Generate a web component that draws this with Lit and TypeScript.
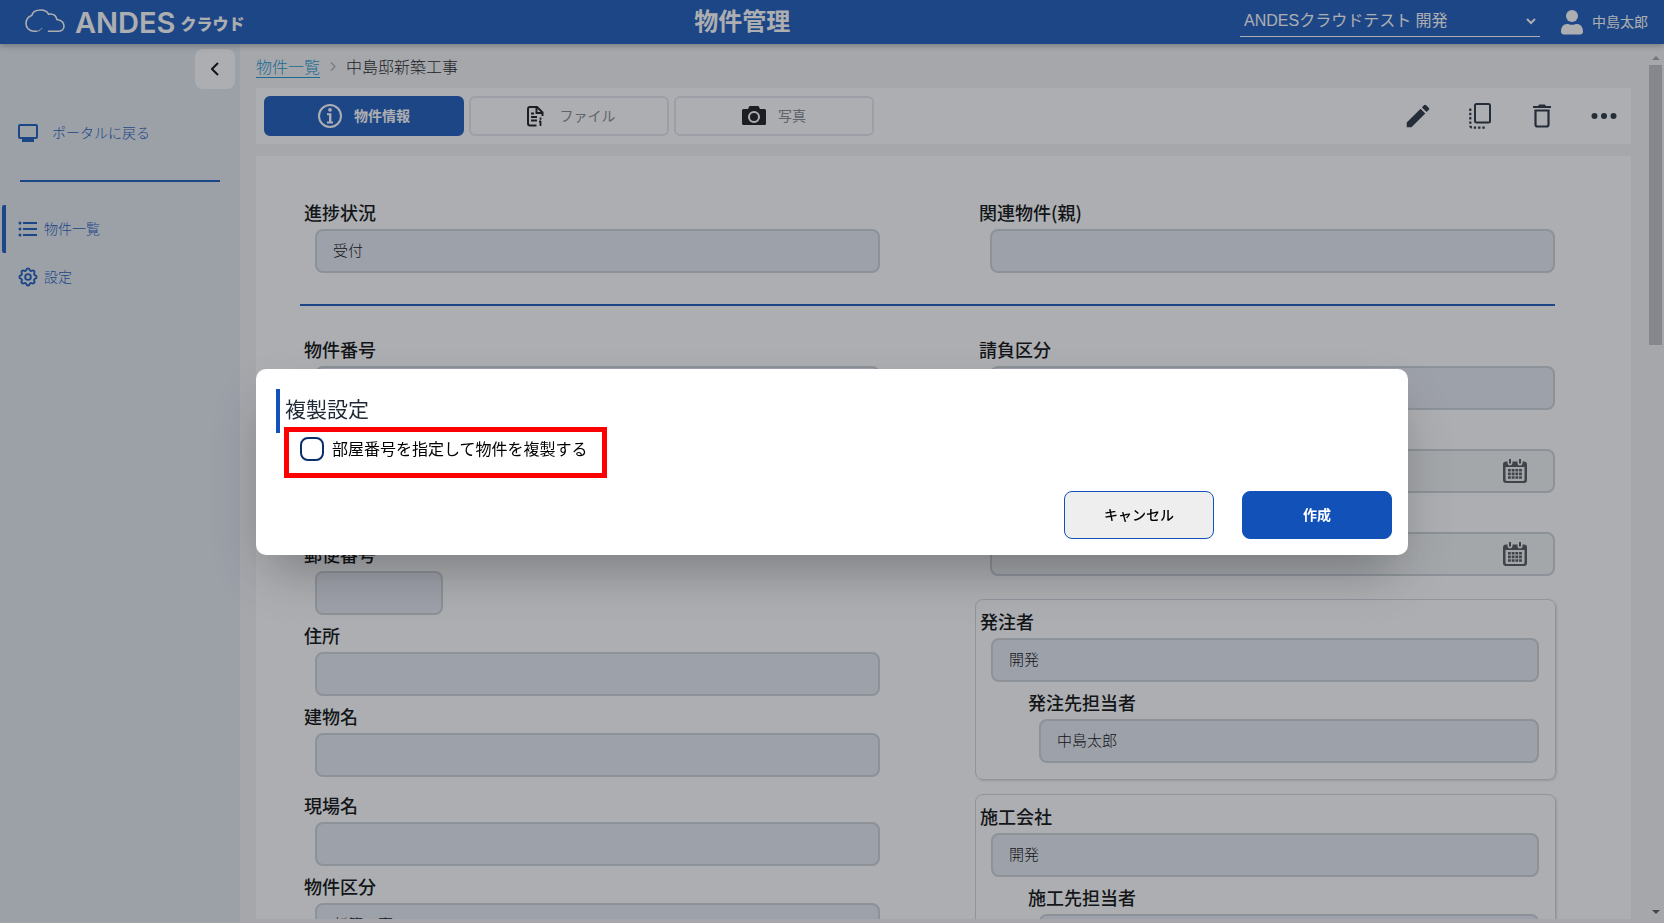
import { LitElement, html, svg, css, nothing } from "lit";
import { customElement, property, state } from "lit/decorators.js";

const cloud = svg`<svg viewBox="0 0 40 24" width="40" height="24" fill="none" stroke="currentColor" stroke-width="1.6" stroke-linecap="round"><path d="M12 22.2H8.500C4 22 1 18.500 1 14.800c0-4 1.800-7 5.800-8.300C7.500 3 11 1 15.800 1c3.700 0 6.500 1.600 7.700 4.200 4.600-.8 7.600 1.600 8.400 5.300 4.200.8 7.100 3.100 7.100 6.500 0 3-2.200 5.200-5.200 5.200H23.500"/><path d="M13.500 21.800l1.500-.8M16 20.200l.8-.8" stroke-width="1"/></svg>`;
const person = svg`<svg viewBox="0 0 22 25" width="22" height="25" fill="currentColor"><circle cx="11" cy="6" r="6"/><path d="M0 21.500C0 17 2.500 14 6 14c1.800 0 2.800.8 5 .8s3.200-.8 5-.8c3.500 0 6 3 6 7.500 0 2-1 3-3 3H3c-2 0-3-1-3-3z"/></svg>`;
const monitor = svg`<svg viewBox="0 0 20 18" width="20" height="18"><rect x="1" y="1" width="18" height="13" rx="1" fill="none" stroke="currentColor" stroke-width="2"/><path d="M4 15h12v3H4z" fill="currentColor"/></svg>`;
const list = svg`<svg viewBox="0 0 20 16" width="20" height="16" fill="currentColor"><circle cx="2" cy="2" r="1.500"/><circle cx="2" cy="8" r="1.500"/><circle cx="2" cy="14" r="1.500"/><path d="M5 1h14v2H5zM5 7h14v2H5zM5 13h14v2H5z"/></svg>`;
const gear = svg`<svg viewBox="1.500 1.500 21 21" width="20" height="20" fill="none" stroke="currentColor" stroke-width="2" stroke-linejoin="round"><path d="M10.300 4.300c.4-1.750 2.950-1.750 3.400 0a1.720 1.720 0 0 0 2.570 1.070c1.540-.94 3.300.82 2.370 2.370a1.720 1.720 0 0 0 1.060 2.570c1.760.42 1.760 2.920 0 3.350a1.720 1.720 0 0 0-1.060 2.570c.93 1.540-.83 3.300-2.370 2.370a1.720 1.720 0 0 0-2.570 1.060c-.45 1.760-3 1.760-3.400 0a1.720 1.720 0 0 0-2.570-1.060c-1.540.93-3.300-.83-2.370-2.370a1.720 1.720 0 0 0-1.060-2.570c-1.760-.43-1.760-2.930 0-3.350a1.720 1.720 0 0 0 1.060-2.570c-.93-1.550.83-3.310 2.370-2.370 1 .6 2.300.07 2.570-1.070z"/><circle cx="12" cy="12" r="3"/></svg>`;
const chevronLeft = svg`<svg viewBox="0 0 8 14" width="8" height="14" fill="none" stroke="currentColor" stroke-width="2"><path d="M7 1L1 7l6 6"/></svg>`;
const chevronRight = svg`<svg viewBox="0 0 6 9" width="6" height="9" fill="none" stroke="currentColor" stroke-width="1.200"><path d="M1 .5l4 4-4 4"/></svg>`;
const chevronDown = svg`<svg viewBox="0 0 10 7" width="10" height="7" fill="none" stroke="currentColor" stroke-width="2"><path d="M1 1l4 4 4-4"/></svg>`;
const info = svg`<svg viewBox="0 0 24 24" width="24" height="24"><circle cx="12" cy="12" r="11" fill="none" stroke="currentColor" stroke-width="2"/><circle cx="12" cy="5.800" r="1.900" fill="currentColor"/><path d="M9 9.200h4.400v8.300H15v2H9v-2h2v-6.300H9z" fill="currentColor"/></svg>`;
const file = svg`<svg viewBox="0 0 17 21" width="17" height="21" fill="none" stroke="currentColor" stroke-width="2"><path d="M9.500 19.500H3a2 2 0 0 1-2-2V3a2 2 0 0 1 2-2h7l5.500 5.500V10"/><path d="M9.500 1.500V7H16"/><path d="M4 7.500h3M4 11h6M4 14.500h6M13.500 11.500v2.200M13.500 15v5M12 15.500h2" stroke-width="1.800"/></svg>`;
const camera = svg`<svg viewBox="0 0 24 20" width="24" height="20"><path fill="currentColor" fill-rule="evenodd" d="M1.500 3H6l1.500-3h9L18 3h4.500A1.500 1.500 0 0 1 24 4.500v13a1.500 1.500 0 0 1-1.500 1.500h-21A1.500 1.500 0 0 1 0 17.500v-13A1.500 1.500 0 0 1 1.500 3zM12 5a6 6 0 1 0 0 12 6 6 0 0 0 0-12zm0 2a4 4 0 1 1 0 8 4 4 0 0 1 0-8z"/></svg>`;
const pencil = svg`<svg viewBox="0 0 24 24" width="30" height="30" fill="currentColor"><path d="M3 17.250V21h3.750L17.810 9.940l-3.750-3.750L3 17.250zM20.710 7.040a1 1 0 0 0 0-1.410l-2.340-2.340a1 1 0 0 0-1.410 0l-1.830 1.830 3.750 3.750 1.830-1.830z"/></svg>`;
const duplicate = svg`<svg viewBox="0 0 22 26" width="22" height="26" fill="none" stroke="currentColor"><rect x="6" y="1" width="15" height="18.500" rx="1.500" stroke-width="2"/><path d="M1.300 5.500v17.200a2 2 0 0 0 2 2H17" stroke-width="2.200" stroke-dasharray="2.400 1.900"/></svg>`;
const trash = svg`<svg viewBox="0 0 18 24" width="18" height="24"><path d="M0 2h5l1.200-1.500h5.600L13 2h5v2H0z" fill="currentColor"/><path d="M2.500 6.500h13v14a2 2 0 0 1-2 2h-9a2 2 0 0 1-2-2z" fill="none" stroke="currentColor" stroke-width="2.200"/></svg>`;
const more = svg`<svg viewBox="0 0 26 6" width="26" height="6" fill="currentColor"><circle cx="3.500" cy="3" r="3"/><circle cx="13" cy="3" r="3"/><circle cx="22.500" cy="3" r="3"/></svg>`;
const calendar = svg`<svg viewBox="0 0 24 24" width="24" height="24"><path fill="currentColor" fill-rule="evenodd" d="M3 2.500h1.500V4a2.500 2.500 0 0 0 5 0V2.500h5V4a2.500 2.500 0 0 0 5 0V2.500H21a3 3 0 0 1 3 3V21a3 3 0 0 1-3 3H3a3 3 0 0 1-3-3V5.500a3 3 0 0 1 3-3zM2.500 8v12.500A1.500 1.500 0 0 0 4 22h16a1.500 1.500 0 0 0 1.500-1.500V8z"/><path fill="currentColor" d="M6 0h2v4.500H6zM16 0h2v4.500h-2z"/><path fill="currentColor" d="M5 10h2.800v2.600H5zM8.700 10h2.800v2.600H8.700zM12.400 10h2.800v2.600h-2.800zM16.100 10h2.800v2.600h-2.800zM5 13.600h2.800v2.600H5zM8.700 13.600h2.800v2.600H8.700zM12.400 13.600h2.800v2.600h-2.800zM16.100 13.600h2.800v2.600h-2.800zM5 17.200h2.800v2.600H5zM8.700 17.200h2.800v2.600H8.700zM12.400 17.200h2.800v2.600h-2.800zM16.100 17.200h2.800v2.600h-2.800z"/></svg>`;

const base = css`
  * { box-sizing: border-box; }
  button, input, select { font: inherit; color: inherit; margin: 0; }
  svg { display: block; flex: none; }
  a { color: inherit; text-decoration: none; }
`;

@customElement("form-field")
class FormField extends LitElement {
  @property() label = "";
  @property() value = "";
  @property({ type: Boolean }) date = false;
  static styles = [base, css`
    :host { display: block; padding-left: 15px; color: #000; }
    .label { display: block; height: 30px; margin-left: -11px; font-size: 18px; font-weight: 500; line-height: 26px; }
    .spacer { height: 30px; }
    .box { display: flex; align-items: center; height: 44px; border: 2px solid #cbd0d6; border-radius: 8px; background: #e7e9f2; padding: 0 16px; }
    .date { background: #f2f3f4; padding-right: 26px; color: #4b4e54; }
    .input { flex: 1; min-width: 0; height: 40px; border: 0; padding: 0 0 4px; background: none; font-size: 15px; font-weight: 300; outline: none; }
  `];
  render() {
    return html`
      ${this.label ? html`<label class="label" for="input">${this.label}</label>` : html`<div class="spacer"></div>`}
      <div class="box ${this.date ? "date" : ""}">
        <input class="input" id="input" readonly .value=${this.value} />
        ${this.date ? calendar : nothing}
      </div>`;
  }
}

@customElement("app-root")
class AppRoot extends LitElement {
  @state() checked = false;
  static styles = [base, css`
    :host { display: flex; flex-direction: column; height: 100vh; overflow: hidden; background: #f4f4f6; color: #0f1012; font-family: "Noto Sans CJK JP", sans-serif; font-size: 14px; line-height: 20px; }
    .header { display: flex; align-items: center; justify-content: space-between; height: 44px; flex: none; padding: 0 16px 0 25px; background: #1252b8; color: #fff; box-shadow: 0 2px 6px rgba(0, 0, 0, .3); z-index: 1; }
    .brand { display: flex; align-items: center; gap: 10px; padding-bottom: 2px; }
    .wordmark { display: flex; align-items: center; gap: 5px; padding-top: 4px; font-family: Inter, sans-serif; font-size: 29px; font-weight: 600; line-height: 38px; }
    .kana { font-family: "Noto Sans CJK JP", sans-serif; font-size: 16px; font-weight: 900; line-height: 36px; }
    .title { margin: 0; padding-bottom: 4px; font-size: 24px; font-weight: 700; line-height: 40px; }
    .account { display: flex; align-items: center; gap: 21px; }
    .tenant { display: flex; align-items: center; width: 300px; height: 30px; border-bottom: 1px solid #fff; padding-right: 4px; }
    .select { flex: 1; appearance: none; border: 0; background: none; padding: 0 4px 2px; font-family: "Liberation Sans", "Noto Sans CJK JP", sans-serif; font-size: 16px; line-height: 24px; outline: none; }
    .user { display: flex; align-items: center; gap: 9px; }
    .user-name { padding-bottom: 2px; }
    .body { display: flex; flex: 1; min-height: 0; padding-bottom: 4px; }
    .sidebar { width: 240px; flex: none; display: flex; flex-direction: column; background: #e4e9f1; color: #1252b8; font-weight: 300; margin-bottom: -3px; }
    .collapse { align-self: flex-end; display: flex; align-items: center; justify-content: center; width: 40px; height: 40px; margin: 5px 5px 0 0; border: 0; border-radius: 8px; background: #fff; color: #000; }
    .portal { display: flex; align-items: center; gap: 14px; height: 48px; margin-top: 20px; padding-left: 18px; }
    .rule { height: 2px; margin: 23px 20px; background: #1252b8; }
    .nav { display: flex; align-items: center; gap: 6px; height: 48px; margin-left: 2px; padding-left: 12px; border-left: 4px solid transparent; }
    .nav-text { padding-bottom: 2px; }
    .nav.active { border-left-color: #1252b8; border-radius: 2px; }
    .main { flex: 1; min-width: 0; overflow-y: auto; scrollbar-width: none; padding: 0 17px 0 16px; }
    .crumbs { display: flex; align-items: center; gap: 10px; height: 44px; font-size: 16px; font-weight: 300; line-height: 24px; }
    .crumb-link { color: #0b8fce; text-decoration: underline; text-underline-offset: 4px; text-decoration-thickness: 1px; }
    .crumbs svg { color: #a4a6aa; }
    .toolbar { display: flex; align-items: center; height: 56px; padding: 0 11px 0 8px; background: #fff; }
    .tabs { display: flex; gap: 5px; flex: 1; }
    .tab { display: flex; align-items: center; justify-content: center; gap: 12px; width: 200px; height: 40px; border: 2px solid #e5e7f0; border-radius: 6px; background: none; color: #0f1014; padding: 0; }
    .tab-text { padding-bottom: 2px; color: #7f838a; }
    .tab.active { background: #1252b8; border-color: #1252b8; color: #fff; font-weight: 700; }
    .tab.active .tab-text { color: #fff; }
    .tab.file { gap: 16px; padding-left: 4px; }
    .actions { display: flex; gap: 30px; }
    .action { display: flex; align-items: center; justify-content: center; width: 32px; height: 40px; border: 0; padding: 0; background: none; color: #1f2937; }
    .card { margin-top: 12px; padding: 43px 76px 43px 44px; background: #fff; }
    .columns { display: grid; grid-template-columns: 1fr 1fr; gap: 95px; }
    .column { display: flex; flex-direction: column; gap: 7px; }
    .column.right { gap: 9px; }
    .divider { height: 2px; margin: 31px 0 30px; background: #1252b8; }
    .postal { width: 143px; margin-top: 124px; }
    .site { margin-top: 8px; }
    .group { display: flex; flex-direction: column; gap: 7px; margin: 14px -1px -1px 0; padding: 8px 16px 16px 0; border: 1px solid #d3d5da; border-radius: 8px; box-shadow: 1px 1px 2px rgba(0, 0, 0, .15); }
    .group + .group { margin-top: 6px; }
    .sub { margin-left: 48px; }
    .scroll { display: flex; flex-direction: column; align-items: center; width: 16px; flex: none; padding: 12px 2px 5px 1px; color: #a0a0a0; }
    .thumb { width: 13px; height: 280px; margin: 5px 0 auto; background: #bebfc1; }
    .overlay { position: fixed; inset: 0; z-index: 2; display: flex; align-items: center; justify-content: center; background: rgba(48, 52, 60, .4); }
    .modal { position: relative; width: calc(100% - 64px); max-width: 1152px; border-radius: 10px; background: #fff; color: #000; padding: 20px 16px 16px 20px; box-shadow: 0 25px 50px -12px rgba(0, 0, 0, .3); }
    .heading { height: 44px; margin: 0; border-left: 4px solid #1252b8; padding-left: 5px; color: #1f2937; font-size: 21px; font-weight: 400; line-height: 38px; }
    .option { display: flex; align-items: center; gap: 8px; width: max-content; height: 24px; margin: 4px 0 0 24px; font-size: 16px; line-height: 24px; }
    .option-text { padding-bottom: 2px; }
    .check { appearance: none; width: 24px; height: 24px; border: 2px solid #0b2f6b; border-radius: 8px; }
    .check:checked { background: #1252b8; }
    .marker { position: absolute; left: 28px; top: 58px; width: 323px; height: 51px; border: 5px solid #f00; pointer-events: none; }
    .buttons { display: flex; justify-content: flex-end; gap: 28px; margin-top: 30px; }
    .button { width: 150px; height: 48px; border: 1px solid #1252b8; border-radius: 8px; background: #eee; font-weight: 500; padding: 0 0 2px; }
    .button.primary { background: #1252b8; color: #fff; font-weight: 700; }
  `];
  render() {
    return html`
      <header class="header">
        <div class="brand">${cloud}<div class="wordmark"><span>ANDES</span><span class="kana">クラウド</span></div></div>
        <h1 class="title">物件管理</h1>
        <div class="account">
          <div class="tenant">
            <select class="select" aria-label="ANDESクラウドテスト 開発"><option>ANDESクラウドテスト 開発</option></select>${chevronDown}
          </div>
          <div class="user">${person}<span class="user-name">中島太郎</span></div>
        </div>
      </header>
      <div class="body">
        <nav class="sidebar">
          <button class="collapse">${chevronLeft}</button>
          <a class="portal" href="#">${monitor}<span class="nav-text">ポータルに戻る</span></a>
          <div class="rule"></div>
          <a class="nav active" href="#">${list}<span class="nav-text">物件一覧</span></a>
          <a class="nav" href="#">${gear}<span class="nav-text">設定</span></a>
        </nav>
        <main class="main">
          <div class="crumbs"><a class="crumb-link" href="#">物件一覧</a>${chevronRight}<span>中島邸新築工事</span></div>
          <div class="toolbar">
            <div class="tabs">
              <button class="tab active">${info}<span class="tab-text">物件情報</span></button>
              <button class="tab file">${file}<span class="tab-text">ファイル</span></button>
              <button class="tab">${camera}<span class="tab-text">写真</span></button>
            </div>
            <div class="actions">
              <button class="action">${pencil}</button>
              <button class="action">${duplicate}</button>
              <button class="action">${trash}</button>
              <button class="action">${more}</button>
            </div>
          </div>
          <div class="card">
            <div class="columns">
              <form-field label="進捗状況" value="受付"></form-field>
              <form-field label="関連物件(親)"></form-field>
            </div>
            <div class="divider"></div>
            <div class="columns">
              <div class="column">
                <form-field label="物件番号"></form-field>
                <form-field class="postal" label="郵便番号"></form-field>
                <form-field label="住所"></form-field>
                <form-field label="建物名"></form-field>
                <form-field class="site" label="現場名"></form-field>
                <form-field label="物件区分" value="新築工事"></form-field>
              </div>
              <div class="column right">
                <form-field label="請負区分"></form-field>
                <form-field date></form-field>
                <form-field date></form-field>
                <section class="group">
                  <form-field label="発注者" value="開発"></form-field>
                  <form-field class="sub" label="発注先担当者" value="中島太郎"></form-field>
                </section>
                <section class="group">
                  <form-field label="施工会社" value="開発"></form-field>
                  <form-field class="sub" label="施工先担当者"></form-field>
                </section>
              </div>
            </div>
          </div>
        </main>
        <div class="scroll" aria-hidden="true">
          <svg viewBox="0 0 8 4" width="8" height="4" fill="currentColor"><path d="M0 4l4-4 4 4z"/></svg>
          <div class="thumb"></div>
          <svg viewBox="0 0 8 4" width="8" height="4" fill="#505050"><path d="M0 0l4 4 4-4z"/></svg>
        </div>
      </div>
      <div class="overlay">
        <div class="modal" role="dialog" aria-labelledby="heading">
          <h2 class="heading" id="heading">複製設定</h2>
          <label class="option"><input class="check" type="checkbox" .checked=${this.checked} @change=${(e: Event) => (this.checked = (e.target as HTMLInputElement).checked)} /><span class="option-text">部屋番号を指定して物件を複製する</span></label>
          <div class="marker"></div>
          <div class="buttons"><button class="button">キャンセル</button><button class="button primary">作成</button></div>
        </div>
      </div>`;
  }
}
